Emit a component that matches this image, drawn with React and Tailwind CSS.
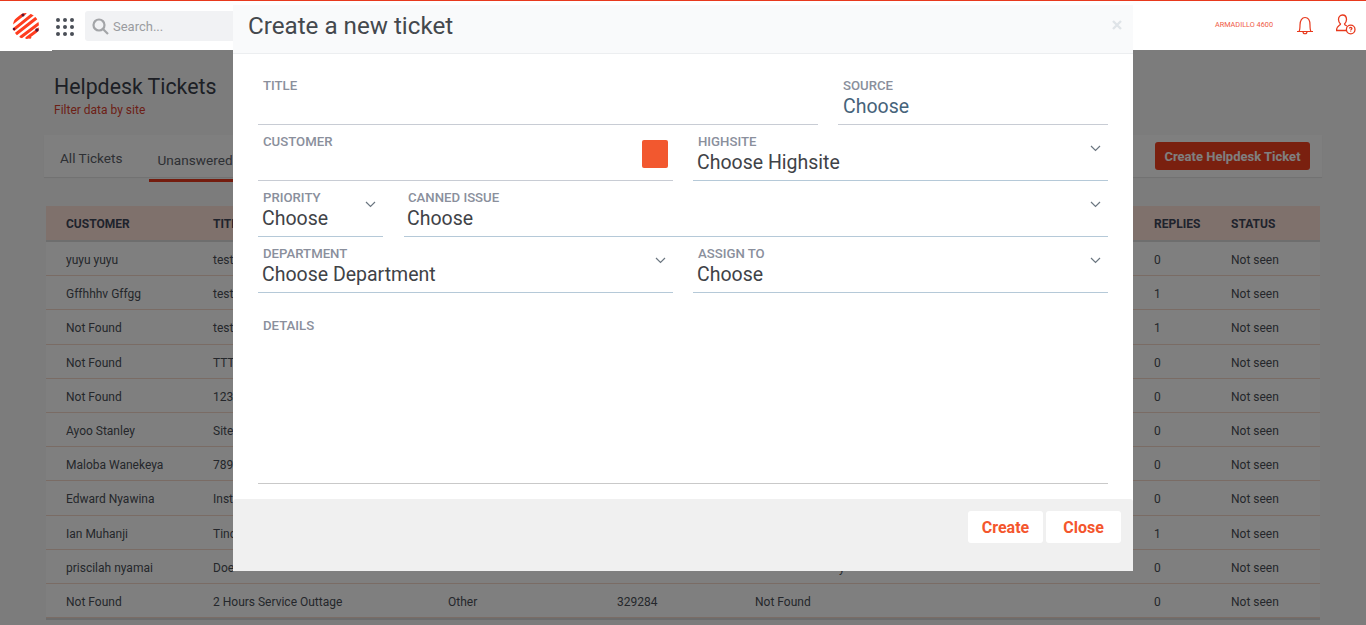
import React from "react";

const rows = [
  ["yuyu yuyu", "test", "0"],
  ["Gffhhhv Gffgg", "test", "1"],
  ["Not Found", "test", "1"],
  ["Not Found", "TTT", "0"],
  ["Not Found", "123-", "0"],
  ["Ayoo Stanley", "Site", "0"],
  ["Maloba Wanekeya", "789", "0"],
  ["Edward Nyawina", "Inst", "0"],
  ["Ian Muhanji", "Tinc", "1"],
  ["priscilah nyamai", "Doe", "0"],
  ["Not Found", "2 Hours Service Outtage", "0"],
];

function Chevron() {
  return (
    <svg width="11" height="7" viewBox="0 0 11 7" fill="none" stroke="#6b7680" strokeWidth="1.2" className="shrink-0">
      <path d="M1 1l4.5 4.5L10 1" />
    </svg>
  );
}

function Field({ label, value, chevron, className, innerClass = "", valueClass = "text-[#3f4347]", border = "border-[#b5c9d8]" }) {
  return (
    <div className={`relative h-[56px] border-b ${border} ${className}`}>
      <div className={innerClass}>
        <div className="pl-[5px] pt-[7px] text-[13.2px] leading-[20px] font-medium text-[#8a8f9c]">{label}</div>
        {value && <div className={`pl-[4px] -mt-[1px] text-[19.5px] leading-[24px] ${valueClass}`}>{value}</div>}
      </div>
      {chevron && (
        <div className="absolute right-[7px] top-[20px]">
          <Chevron />
        </div>
      )}
    </div>
  );
}

export default function App() {
  return (
    <div className="relative h-[625px] w-[1366px] overflow-hidden bg-[#f9f9f9] font-['Roboto',sans-serif]">
      <header className="flex h-[50px] items-start border-t border-[#e8391d] bg-white pr-[10px]">
        <div className="relative z-10 flex h-[50px] w-[52px] shrink-0 items-start bg-white pl-[12px] pt-[12px]">
          <svg width="28" height="26" viewBox="0 0 28 26">
            <defs>
              <clipPath id="logo-clip">
                <circle cx="14" cy="13" r="13" />
              </clipPath>
            </defs>
            <g stroke="#ff3d1f" strokeWidth="3" strokeLinecap="round" clipPath="url(#logo-clip)">
              <path d="M-2 12L13 0" />
              <path d="M0 18L21 1" />
              <path d="M4 21L27 3" />
              <path d="M9 24L30 8" />
              <path d="M15 25L30 14" />
            </g>
            <circle cx="11" cy="2" r="1.5" fill="#5c1430" />
            <circle cx="2" cy="16" r="1.3" fill="#5c1430" />
            <circle cx="25" cy="17" r="1.8" fill="#5c1430" />
            <circle cx="18" cy="24.500" r="1.3" fill="#ff3d1f" />
          </svg>
        </div>
        <div className="ml-[4px] mt-[17px] grid shrink-0 grid-cols-3 gap-[3px]">
          {Array.from({ length: 9 }).map((_, i) => (
            <span key={i} className="h-[4px] w-[4px] rounded-full bg-[#4a4f57]" />
          ))}
        </div>
        <div className="ml-[11px] mt-[10px] flex h-[30px] w-[200px] items-center rounded-[3px] bg-[#f1f2f4] pl-[7px]">
          <svg width="17" height="17" viewBox="0 0 17 17" fill="none" stroke="#a3a5a8" strokeWidth="2.2">
            <circle cx="7" cy="7" r="5.500" />
            <path d="M11 11l5 5" />
          </svg>
          <span className="ml-[4px] mt-[2px] text-[13px] text-[#9a9ca0]">Search...</span>
        </div>
        <div className="ml-auto mt-[13px] flex items-start">
          <span className="mt-[6px] text-[7.300px] leading-[10px] text-[#ef5a45]">ARMADILLO 4600</span>
          <svg width="18" height="19" viewBox="0 0 18 19" fill="none" stroke="#e8391d" strokeWidth="1.2" className="ml-[23px] mt-[2px]">
            <path d="M1 15.500h16M3 15.500c1-1.500 1-3 1-6.500C4 4.500 6 1.500 9 1.500s5 3 5 7.500c0 3.500 0 5 1 6.500M7 15.500c0 3 4 3 4 0" />
          </svg>
          <svg width="20" height="21" viewBox="0 0 20 21" fill="none" stroke="#e8391d" strokeWidth="1.3" className="ml-[22px]">
            <path d="M6.500 1C9 1 10.500 3 10.500 5.500S9 9.500 8.500 10c0 1 1 1.300 2.500 2M6.500 1C4 1 2.500 3 2.500 5.500S4 9.500 4.500 10c0 1.500-4 1.500-4 6.500h9.500" />
            <circle cx="14.700" cy="15.500" r="4.300" />
            <path d="M13.500 14.500c0-1.500 2.400-1.500 2.400 0 0 .8-1.200 1-1.200 2M14.700 17.500v.6" />
          </svg>
        </div>
      </header>

      <main className="pl-[46px] pr-[46px]">
        <div className="pl-[8px] pt-[22px]">
          <h1 className="text-[21.300px] leading-[30px] text-[#3a3f4a]">Helpdesk Tickets</h1>
          <p className="text-[12px] leading-[16px] text-[#d9412f]">Filter data by site</p>
        </div>
        <div className="-mx-[2px] mt-[17px] flex h-[42px] items-center justify-between bg-white pl-[16px] pr-[12px] shadow-[0_1px_1px_rgba(0,0,0,0.08)]">
          <div className="flex h-full">
            <div className="pt-[13px] text-[13.600px] text-[#5b6068]">All Tickets</div>
            <div className="ml-[26px] h-[47px] w-[100px] border-b-[3px] border-[#e8391d] pl-[9px] pt-[15px] text-[13.600px] text-[#5b6068]">Unanswered</div>
          </div>
          <button className="h-[28px] w-[155px] rounded-[3px] bg-[#f4401f] pt-[1px] text-[13px] font-bold text-white">Create Helpdesk Ticket</button>
        </div>

        <div className="mt-[29px] border-b-2 border-[#d8d8d8] bg-white">
          <div className="flex h-[36px] items-center border-b-2 border-[#dcdcdc] bg-[#ffe3d8] pt-[2px] text-[12px] font-bold text-[#3f4658]">
            <div className="w-[167px] pl-[20px]">CUSTOMER</div>
            <div className="w-[941px]">TITLE</div>
            <div className="w-[77px]">REPLIES</div>
            <div>STATUS</div>
          </div>
          {rows.map((r, i) => (
            <div key={i} className="flex h-[34.200px] items-center border-b border-[#f5d9cb] pt-[3px] text-[12px] text-[#4a4f57]">
              <div className="w-[167px] pl-[20px]">{r[0]}</div>
              <div className="w-[235px]">{r[1]}</div>
              <div className="w-[169px]">{i === 10 ? "Other" : ""}</div>
              <div className="w-[138px]">{i === 10 ? "329284" : ""}</div>
              <div className={`w-[399px] ${i === 9 ? "pl-[84px]" : ""}`}>{i === 10 ? "Not Found" : i === 9 ? "y" : ""}</div>
              <div className="w-[77px]">{r[2]}</div>
              <div>Not seen</div>
            </div>
          ))}
        </div>
      </main>

      <div className="absolute inset-x-0 bottom-0 top-[50px] bg-black/50" />

      <div className="absolute left-[233px] top-[5px] flex h-[566px] w-[900px] flex-col bg-white">
        <div className="flex h-[49px] items-center justify-between border-b border-[#eceef0] bg-[#f9fafb] pb-[5px] pl-[15px] pr-[11px]">
          <h2 className="text-[24.200px] text-[#44484d]">Create a new ticket</h2>
          <svg width="10" height="10" viewBox="0 0 10 10" stroke="#dfe4e8" strokeWidth="2.400" className="mb-[4px]">
            <path d="M1 1l8 8M9 1l-8 8" />
          </svg>
        </div>
        <div className="flex flex-col px-[25px] pt-[15px]">
          <div className="flex gap-[20px]">
            <Field label="TITLE" className="w-[560px]" border="border-[#c8ccd4]" />
            <Field label="SOURCE" value="Choose" className="w-[270px]" valueClass="ml-[1px] text-[#46637a]" border="border-[#c8ccd4]" />
          </div>
          <div className="flex gap-[20.500px]">
            <div className="relative h-[56px] w-[414.500px] border-b border-[#c8ccd4]">
              <div className="pl-[5px] pt-[7px] text-[13.2px] leading-[20px] font-medium text-[#8a8f9c]">CUSTOMER</div>
              <div className="absolute right-[5px] top-[15px] h-[28px] w-[26px] rounded-[2px] bg-[#f2582f]" />
            </div>
            <Field label="HIGHSITE" value="Choose Highsite" chevron className="w-[415px]" />
          </div>
          <div className="flex gap-[21px]">
            <Field label="PRIORITY" value="Choose" chevron className="w-[125px]" />
            <Field label="CANNED ISSUE" value="Choose" chevron className="w-[704px]" innerClass="-ml-[1px]" />
          </div>
          <div className="flex gap-[20.500px]">
            <Field label="DEPARTMENT" value="Choose Department" chevron className="w-[414.500px]" />
            <Field label="ASSIGN TO" value="Choose" chevron className="w-[415px]" />
          </div>
          <div className="h-[191px] border-b border-[#c9c9c9] pl-[5px] pt-[23px] text-[13.2px] leading-[20px] font-medium text-[#8a8f9c]">DETAILS</div>
        </div>
        <div className="mt-auto flex h-[72px] items-start justify-end gap-[3px] rounded-t-[3px] bg-[#f0f0f0] pr-[12px] pt-[12px]">
          <button className="h-[32px] w-[75px] rounded-[3px] bg-white pt-[1px] text-[16px] font-bold text-[#f4562d]">Create</button>
          <button className="h-[32px] w-[75px] rounded-[3px] bg-white pt-[1px] text-[16px] font-bold text-[#f4562d]">Close</button>
        </div>
      </div>
    </div>
  );
}
